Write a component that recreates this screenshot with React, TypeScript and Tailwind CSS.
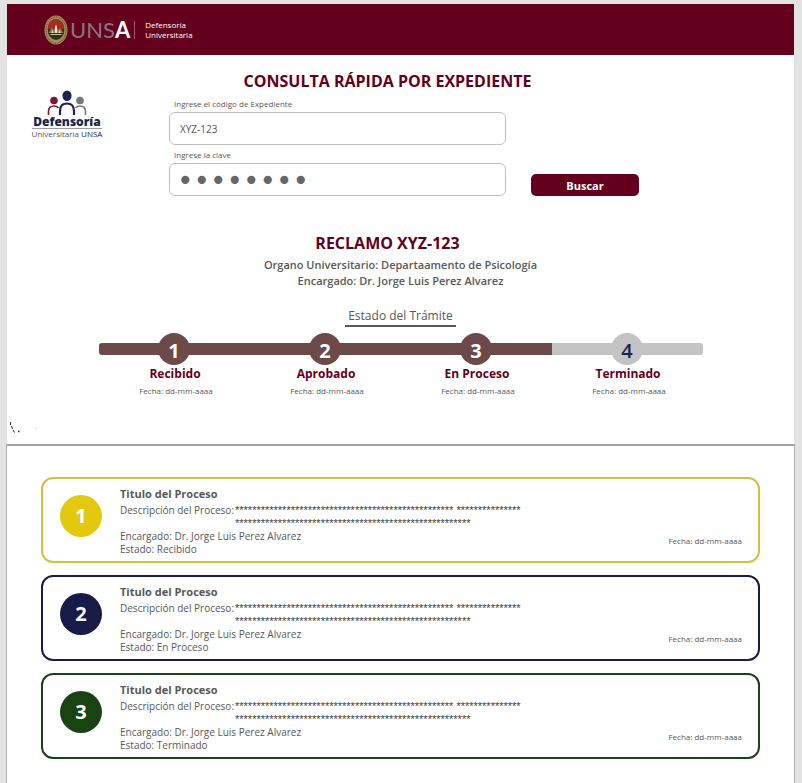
import { useState } from "react";

const steps = [
  { n: 1, name: "Recibido", done: true },
  { n: 2, name: "Aprobado", done: true },
  { n: 3, name: "En Proceso", done: true },
  { n: 4, name: "Terminado", done: false },
];

const processes = [
  { n: 1, status: "Recibido", border: "border-[#d3c03f]", fill: "bg-[#e2c80e]" },
  { n: 2, status: "En Proceso", border: "border-[#161d49]", fill: "bg-[#161b47]" },
  { n: 3, status: "Terminado", border: "border-[#1b4416]", fill: "bg-[#1a4314]" },
];

function Seal() {
  return (
    <svg viewBox="0 0 24 30" className="h-[30px] w-6" aria-hidden="true">
      <ellipse cx="12" cy="15" rx="11.5" ry="14.5" fill="#a98f5c" />
      <ellipse cx="12" cy="15" rx="10" ry="13" fill="none" stroke="#6d5530" strokeWidth="1.4" strokeDasharray="0.9 0.9" />
      <ellipse cx="12" cy="14.500" rx="8.400" ry="10.500" fill="#2d3423" />
      <path d="M3.900 13C4.500 7.500 8 4.300 12 4.300S19.500 7.500 20.100 13l-3 2H7z" fill="#a92a22" />
      <path d="M4.500 18l3.500-5 2 2 2-4 2 4 2-2 3.500 5z" fill="#8a7f4c" />
      <path d="M11 18v-6l1-2.500 1 2.500v6zM7.500 18l1-3 1 3zM14.500 18l1-3 1 3z" fill="#efe9d6" />
      <path d="M6.500 19.500h11" stroke="#c9b983" strokeWidth="1" />
    </svg>
  );
}

function People() {
  return (
    <svg viewBox="0 0 40 26" className="h-[26px] w-10" fill="none" aria-hidden="true">
      <circle cx="7" cy="10.500" r="3.800" fill="#7a1a30" />
      <circle cx="33" cy="10.500" r="3.800" fill="#777777" />
      <path d="M1.500 25v-3.500C1.500 18 3.500 16 7 16c2 0 3.500.7 4.500 2" stroke="#7a1a30" strokeWidth="1.600" />
      <path d="M38.500 25v-3.500c0-3.500-2-5.500-5.500-5.500-2 0-3.500.7-4.500 2" stroke="#777777" strokeWidth="1.600" />
      <ellipse cx="20" cy="5.700" rx="4.600" ry="5.200" fill="#1b2450" />
      <path d="M13 25v-4c0-5 2.500-7.500 7-7.500s7 2.500 7 7.500v4" stroke="#1b2450" strokeWidth="2.200" />
    </svg>
  );
}

export default function App() {
  const [code, setCode] = useState("XYZ-123");
  const [password, setPassword] = useState("expe1234");

  return (
    <div className="min-h-screen bg-[#e3e3e3] pl-[7px] pr-2 pt-1 font-['Open_Sans','Noto_Sans',sans-serif] text-[#585858]">
      <div className="bg-white">
        <header className="flex h-[51px] items-center bg-[#64001d] pl-[37px] text-white">
          <Seal />
          <span className="ml-[2px] font-['Lato',sans-serif] text-[22px] leading-[30px] text-[#8d7580]">
            UNS<span className="font-bold text-white">A</span>
          </span>
          <span className="ml-1 h-[18px] border-l border-[#9a5a6c]" />
          <span className="ml-[10px] text-[8px] font-medium leading-[10px]">
            Defensoría
            <br />
            Universitaria
          </span>
        </header>

        <section className="pr-[26px] pt-[14px]">
          <h1 className="text-center text-[16px] font-bold leading-6 text-[#5f0020]">CONSULTA RÁPIDA POR EXPEDIENTE</h1>
          <form className="flex pl-[26px]" onSubmit={(e) => e.preventDefault()}>
            <div className="flex w-[136px] shrink-0 flex-col">
              <div className="-mt-[3px] flex w-[68px] flex-col items-center">
                <People />
                <p className="font-['Open_Sans',sans-serif] text-[12px] font-extrabold leading-3 text-[#1b2450]">Defensoría</p>
                <p className="whitespace-nowrap border-t border-[#9a9a9a] text-[8px] leading-[10px]">
                  Universitaria<span className="text-[#1b2450]"> UNSA</span>
                </p>
              </div>
            </div>
            <div className="min-w-0 max-w-[337px] flex-1 pt-1">
              <label htmlFor="code" className="mb-px block pl-[5px] text-[8px] font-medium leading-[14px]">
                Ingrese el código de Expediente
              </label>
              <input
                id="code"
                value={code}
                onChange={(e) => setCode(e.target.value)}
                className="block h-[33px] w-full rounded-md border border-[#bfbfbf] px-[10px] text-[10px] font-medium outline-none"
              />
              <label htmlFor="password" className="mb-px mt-[3px] block pl-[5px] text-[8px] font-medium leading-[14px]">
                Ingrese la clave
              </label>
              <input
                id="password"
                type="password"
                value={password}
                onChange={(e) => setPassword(e.target.value)}
                className="block h-[33px] w-full rounded-md border border-[#bfbfbf] px-[7px] pt-[3px] font-['DejaVu_Sans',sans-serif] text-[28px] text-[#666666] outline-none"
              />
            </div>
            <button type="submit" className="ml-[25px] h-[22px] w-[108px] self-end rounded-[5px] bg-[#64001d] pt-px text-[11px] font-bold leading-[22px] text-white">
              Buscar
            </button>
          </form>
        </section>

        <section className="pb-[10px] pt-[35px] text-center">
          <h2 className="pr-[26px] text-[16px] font-bold leading-6 text-[#5f0020]">RECLAMO XYZ-123</h2>
          <p className="mt-[2px] text-[11px] font-semibold leading-4">Organo Universitario: Departaamento de Psicología</p>
          <p className="text-[11px] font-semibold leading-4">Encargado: Dr. Jorge Luis Perez Alvarez</p>
          <div className="mt-[18px] flex justify-center">
            <h3 className="border-b-2 border-[#585858] px-[3px] text-[12px] font-medium leading-[18px]">Estado del Trámite</h3>
          </div>
          <div className="mx-auto mt-[6px] max-w-[604px]">
            <ol className="grid grid-cols-4">
              {steps.map((s) => (
                <li key={s.n} className="flex flex-col items-center">
                  <div className="flex w-full items-center">
                    <span className={s.done ? `h-3 flex-1 bg-[#6c4a49] ${s.n === 1 ? "rounded-l-[3px]" : ""}` : "h-3 flex-1 bg-[#c3c3c3]"} />
                    <span
                      className={
                        s.done
                          ? "-mx-px flex size-8 items-center justify-center rounded-full bg-[#6c4a49] pt-[3px] text-[20px] font-bold leading-6 text-white"
                          : "-mx-px flex size-8 items-center justify-center rounded-full bg-[#c3c3c3] pt-[3px] text-[20px] font-semibold leading-6 text-[#1b2450]"
                      }
                    >
                      {s.n}
                    </span>
                    <span className={s.done ? "h-3 flex-1 bg-[#6c4a49]" : "h-3 flex-1 rounded-r-[3px] bg-[#c3c3c3]"} />
                  </div>
                  <h4 className="pl-[2px] text-[12px] font-bold leading-[18px] text-[#5f0020]">{s.name}</h4>
                  <p className="mt-[2px] pl-1 text-[8px] font-medium leading-3">Fecha: dd-mm-aaaa</p>
                </li>
              ))}
            </ol>
          </div>
          <svg viewBox="0 0 30 12" className="ml-[2px] mt-[25px] h-3 w-[30px]" aria-hidden="true">
            <path d="M1.500 0v3M2.500 4l1 3M4 8l1.500 2.500" stroke="#222222" strokeWidth="1" />
            <path d="M9 9.500h1.500" stroke="#222222" strokeWidth="1.500" />
            <path d="M26 6.500h2" stroke="#dddddd" strokeWidth="1" />
          </svg>
        </section>
      </div>

      <main className="-mx-px border-x border-t-2 border-x-[#b0b0b0] border-t-[#a3a6a6] bg-white pb-6 pl-[34px] pr-[34px] pt-[31px]">
        <ul className="flex flex-col gap-3">
          {processes.map((p) => (
            <li key={p.n} className={`flex h-[86px] rounded-xl border-2 ${p.border} pl-[17px] pr-4`}>
              <span className={`mt-4 flex size-[42px] shrink-0 items-center justify-center rounded-full ${p.fill} text-[20px] font-bold leading-6 text-white`}>
                {p.n}
              </span>
              <div className="ml-[18px] min-w-0 flex-1 pt-[6px] text-[10px] font-medium leading-[13px]">
                <h3 className="mb-px text-[11px] font-bold leading-[18px]">Titulo del Proceso</h3>
                <div className="flex gap-px">
                  <p>Descripción del Proceso:</p>
                  <p className="font-['Liberation_Sans',sans-serif] text-[11px] font-normal text-[#404040]">
                    {"*".repeat(51)} {"*".repeat(15)}
                    <br />
                    {"*".repeat(55)}
                  </p>
                </div>
                <p>Encargado: Dr. Jorge Luis Perez Alvarez</p>
                <p>Estado: {p.status}</p>
              </div>
              <p className="self-end pb-[14px] text-[8px] font-medium leading-3">Fecha: dd-mm-aaaa</p>
            </li>
          ))}
        </ul>
      </main>
    </div>
  );
}
